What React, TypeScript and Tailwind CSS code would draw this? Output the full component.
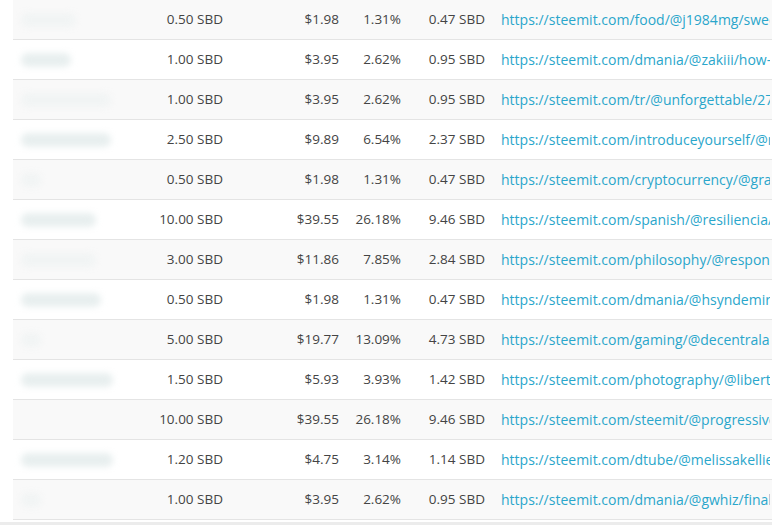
import React from 'react';

interface Row {
  blur: number;
  faint?: boolean;
  amount: string;
  usd: string;
  share: string;
  payout: string;
  url: string;
}

const rows: Row[] = [
  { blur: 55, faint: true, amount: '0.50 SBD', usd: '$1.98', share: '1.31%', payout: '0.47 SBD', url: 'https://steemit.com/food/@j1984mg/sweet-dessert-recipe' },
  { blur: 50, amount: '1.00 SBD', usd: '$3.95', share: '2.62%', payout: '0.95 SBD', url: 'https://steemit.com/dmania/@zakiii/how-to-meme' },
  { blur: 90, faint: true, amount: '1.00 SBD', usd: '$3.95', share: '2.62%', payout: '0.95 SBD', url: 'https://steemit.com/tr/@unforgettable/27-ocak' },
  { blur: 90, amount: '2.50 SBD', usd: '$9.89', share: '6.54%', payout: '2.37 SBD', url: 'https://steemit.com/introduceyourself/@newbie' },
  { blur: 20, faint: true, amount: '0.50 SBD', usd: '$1.98', share: '1.31%', payout: '0.47 SBD', url: 'https://steemit.com/cryptocurrency/@gratitude' },
  { blur: 75, amount: '10.00 SBD', usd: '$39.55', share: '26.18%', payout: '9.46 SBD', url: 'https://steemit.com/spanish/@resiliencia/post' },
  { blur: 75, faint: true, amount: '3.00 SBD', usd: '$11.86', share: '7.85%', payout: '2.84 SBD', url: 'https://steemit.com/philosophy/@responsibility' },
  { blur: 80, amount: '0.50 SBD', usd: '$1.98', share: '1.31%', payout: '0.47 SBD', url: 'https://steemit.com/dmania/@hsyndemir/meme' },
  { blur: 20, faint: true, amount: '5.00 SBD', usd: '$19.77', share: '13.09%', payout: '4.73 SBD', url: 'https://steemit.com/gaming/@decentraland' },
  { blur: 92, amount: '1.50 SBD', usd: '$5.93', share: '3.93%', payout: '1.42 SBD', url: 'https://steemit.com/photography/@liberty' },
  { blur: 0, amount: '10.00 SBD', usd: '$39.55', share: '26.18%', payout: '9.46 SBD', url: 'https://steemit.com/steemit/@progressive' },
  { blur: 92, amount: '1.20 SBD', usd: '$4.75', share: '3.14%', payout: '1.14 SBD', url: 'https://steemit.com/dtube/@melissakellie/vlog' },
  { blur: 20, faint: true, amount: '1.00 SBD', usd: '$3.95', share: '2.62%', payout: '0.95 SBD', url: 'https://steemit.com/dmania/@gwhiz/final' },
];

export default function App() {
  return (
    <div className="h-[527px] w-[772px] overflow-hidden bg-white font-['Open_Sans',sans-serif] text-[13.5px] text-[#444]">
      <div className="ml-[13px] w-[780px]">
        {rows.map((row, i) => (
          <div
            key={i}
            className={`grid h-10 grid-cols-[127px_91px_116px_62px_84px_300px] items-center border-b border-[#e4e4e4] ${
              i % 2 === 0 ? 'bg-[#f9f9f9]' : 'bg-white'
            }`}
          >
            <div className="pl-2">
              {row.blur > 0 ? (
                <span
                  className={`block h-[14px] rounded-full blur-[3px] ${
                    row.faint ? 'bg-[#f1f4f4]' : 'bg-[#e8efef]'
                  }`}
                  style={{ width: row.blur }}
                />
              ) : null}
            </div>
            <div className="pr-2 text-right">{row.amount}</div>
            <div className="pr-2 text-right">{row.usd}</div>
            <div className="pr-2 text-right">{row.share}</div>
            <div className="pr-2 text-right">{row.payout}</div>
            <div className="w-[277px] overflow-hidden whitespace-nowrap pl-2 text-[14px]">
              <a href="#" className="text-[#2aa6cb]">
                {row.url}
              </a>
            </div>
          </div>
        ))}
      </div>
      <div className="mt-[2px] h-[3px] bg-[#ececec]" />
    </div>
  );
}
